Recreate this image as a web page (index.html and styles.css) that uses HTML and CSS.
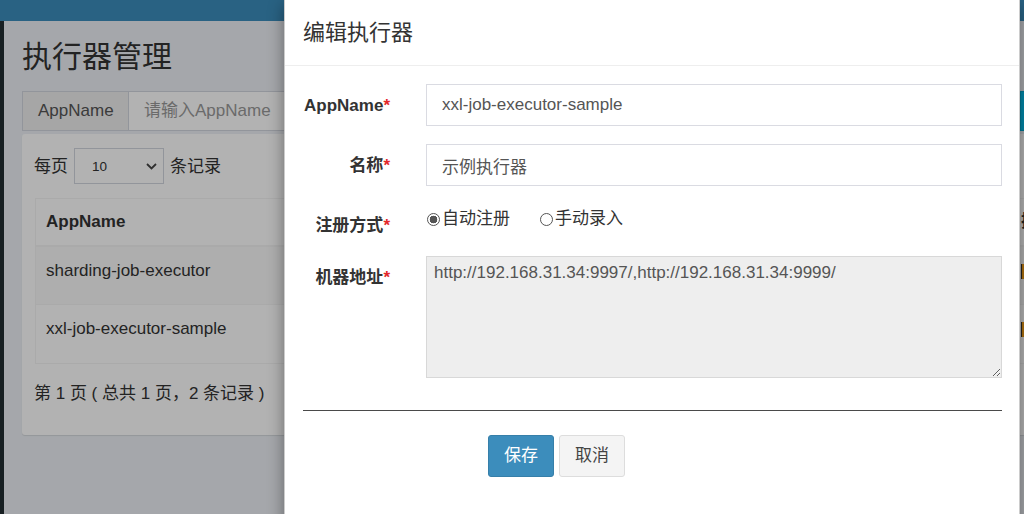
FILE: index.html
```html
<!DOCTYPE html>
<html lang="zh-CN">
<head>
<meta charset="utf-8">
<title>执行器管理</title>
<link rel="stylesheet" href="styles.css">
</head>
<body>
<div class="page">
  <header class="topbar"></header>
  <div class="layout">
    <aside class="sidebar"></aside>
    <main class="content">
      <h1 class="page-title">执行器管理</h1>
      <div class="filter-row">
        <div class="input-group">
          <span class="addon">AppName</span>
          <input class="filter-input" type="text" placeholder="请输入AppName">
        </div>
        <button class="btn-search" type="button" aria-label="搜索"></button>
      </div>
      <section class="box">
        <div class="length-row">
          <span>每页</span>
          <span class="fake-select"><span>10</span>
            <svg class="chev" width="11" height="7" viewBox="0 0 11 7"><path d="M1 1 L5.5 5.5 L10 1" fill="none" stroke="#444" stroke-width="1.8"/></svg>
          </span>
          <span>条记录</span>
        </div>
        <table class="grid-table">
          <colgroup>
            <col class="c1"><col class="c2"><col class="c3"><col class="c4"><col>
          </colgroup>
          <thead>
            <tr><th>AppName</th><th>名称</th><th>注册方式</th><th>OnLine 机器地址</th><th class="ops">操作</th></tr>
          </thead>
          <tbody>
            <tr class="odd"><td>sharding-job-executor</td><td>分片执行器</td><td>自动注册</td><td>查看 ( 1 )</td><td class="ops"><span class="btn-op"></span></td></tr>
            <tr><td>xxl-job-executor-sample</td><td>示例执行器</td><td>自动注册</td><td>查看 ( 2 )</td><td class="ops"><span class="btn-op"></span></td></tr>
          </tbody>
        </table>
        <div class="info">第 1 页 ( 总共 1 页，2 条记录 )</div>
      </section>
    </main>
  </div>

  <div class="backdrop"></div>

  <div class="modal">
    <div class="modal-header">
      <h4 class="modal-title">编辑执行器</h4>
    </div>
    <div class="modal-body">
      <div class="form-row">
        <label class="form-label">AppName<span class="req">*</span></label>
        <input class="form-input" type="text" value="xxl-job-executor-sample">
      </div>
      <div class="form-row">
        <label class="form-label">名称<span class="req">*</span></label>
        <input class="form-input" type="text" value="示例执行器">
      </div>
      <div class="form-row radio-row">
        <label class="form-label">注册方式<span class="req">*</span></label>
        <div class="radios">
          <label class="radio"><input type="radio" name="addressType" checked><span>自动注册</span></label>
          <label class="radio"><input type="radio" name="addressType"><span>手动录入</span></label>
        </div>
      </div>
      <div class="form-row">
        <label class="form-label">机器地址<span class="req">*</span></label>
        <textarea class="form-textarea" readonly>http://192.168.31.34:9997/,http://192.168.31.34:9999/</textarea>
      </div>
      <hr class="divider">
      <div class="actions">
        <button class="btn btn-primary" type="button">保存</button>
        <button class="btn btn-default" type="button">取消</button>
      </div>
    </div>
  </div>
</div>
</body>
</html>
```

FILE: styles.css
```css
html, body {
  margin: 0;
  height: 100%;
  overflow: hidden;
}

body {
  font-family: "Liberation Sans", "Noto Sans CJK SC", sans-serif;
  font-size: 17px;
  line-height: 25px;
  color: #333;
  background: #ecf0f5;
}

.page {
  position: relative;
  width: 1120px;
  height: 514px;
}

.topbar {
  height: 21px;
  background: #3c8dbc;
}

.layout {
  display: flex;
  height: 493px;
}

.sidebar {
  flex: none;
  width: 4px;
  background: #222d32;
}

.content {
  flex: 1;
  min-width: 0;
  background: #ecf0f5;
  padding: 16px 18px 0 18px;
}

.page-title {
  margin: 0;
  font-size: 30px;
  font-weight: 400;
  line-height: 40px;
  color: #333;
}

.filter-row {
  display: flex;
  margin-top: 14px;
  height: 40px;
}

.input-group {
  display: flex;
}

.addon {
  box-sizing: border-box;
  width: 107px;
  height: 40px;
  border: 1px solid #d2d6de;
  background: #eee;
  color: #555;
  padding: 0 15px;
  line-height: 38px;
}

.filter-input {
  box-sizing: border-box;
  width: 260px;
  height: 40px;
  border: 1px solid #d2d6de;
  border-left: 0;
  padding: 0 15px;
  font: inherit;
  color: #555;
  outline: none;
}

.filter-input::placeholder {
  color: #999;
}

.btn-search {
  margin-left: auto;
  width: 82px;
  height: 40px;
  border: 1px solid #00acd6;
  background: #00c0ef;
  color: #fff;
  font: inherit;
}

.box {
  box-sizing: border-box;
  height: 301px;
  margin-top: 3px;
  padding: 14px 12px 0 13px;
  background: #fff;
  border-radius: 3px;
  box-shadow: 0 1px 1px rgba(0, 0, 0, 0.1);
}

.length-row {
  display: flex;
  align-items: center;
  gap: 6px;
  height: 36px;
  margin-left: -1px;
}

.fake-select {
  box-sizing: border-box;
  display: flex;
  align-items: center;
  justify-content: space-between;
  width: 90px;
  height: 36px;
  padding: 0 6px 0 17px;
  border: 1px solid #d2d6de;
  font-size: 13.5px;
  color: #333;
}

.grid-table {
  width: 100%;
  margin-top: 14px;
  border-collapse: collapse;
  table-layout: fixed;
  border: 1px solid #f4f4f4;
}

.grid-table .c1 { width: 250px; }
.grid-table .c2 { width: 230px; }
.grid-table .c3 { width: 230px; }
.grid-table .c4 { width: 265px; }

.grid-table thead tr {
  height: 47px;
}

.grid-table th {
  text-align: left;
  font-weight: bold;
  padding: 0 10px;
  border: 1px solid #f4f4f4;
  border-bottom-width: 2px;
  white-space: nowrap;
}

.grid-table tbody tr {
  height: 59px;
}

.grid-table td {
  vertical-align: top;
  padding: 11px 10px;
  border: 1px solid #f4f4f4;
  white-space: nowrap;
}

.grid-table tr.odd td {
  background: #f9f9f9;
}

.btn-op {
  display: inline-block;
  width: 40px;
  height: 15px;
  margin-top: 6px;
  background: #f39c12;
  border-left: 1px solid #333;
}

.info {
  margin-top: 17px;
  margin-left: -1px;
}

.backdrop {
  position: absolute;
  inset: 0;
  background: rgba(0, 0, 0, 0.3);
}

.modal {
  position: absolute;
  left: 284px;
  top: 0;
  box-sizing: border-box;
  width: 736px;
  height: 540px;
  background: #fff;
  border: 1px solid rgba(0, 0, 0, 0.2);
  border-top: 0;
  box-shadow: 0 5px 15px rgba(0, 0, 0, 0.4);
}

.modal-header {
  box-sizing: border-box;
  height: 66px;
  padding: 18px 18px 0;
  border-bottom: 1px solid #eeeeee;
}

.modal-title {
  margin: 0;
  font-size: 22px;
  font-weight: 400;
  line-height: 30px;
  color: #333;
}

.modal-body {
  padding: 18px 17px 0 18px;
}

.form-row {
  display: grid;
  grid-template-columns: 87px 1fr;
  column-gap: 36px;
  margin-bottom: 18px;
}

.form-label {
  text-align: right;
  font-weight: bold;
  padding-top: 10px;
  line-height: 24px;
  white-space: nowrap;
  color: #333;
}

.req {
  color: #e3282a;
}

.form-input {
  box-sizing: border-box;
  width: 100%;
  height: 42px;
  padding: 0 15px;
  border: 1px solid #dadbe2;
  font: inherit;
  color: #555;
  outline: none;
}

.radio-row {
  height: 34px;
}

.radios {
  display: flex;
  align-items: flex-start;
  gap: 30px;
  padding-top: 2px;
  padding-left: 1px;
  line-height: 26px;
  color: #333;
}

.radio {
  display: flex;
  align-items: center;
  gap: 2px;
}

.radio input {
  appearance: none;
  -webkit-appearance: none;
  box-sizing: border-box;
  width: 13px;
  height: 13px;
  margin: 0;
  border: 1px solid #555;
  border-radius: 50%;
  background: #fff;
}

.radio input:checked {
  background: radial-gradient(circle, #555 0 3.6px, #fff 4.1px);
}

.form-textarea {
  box-sizing: border-box;
  display: block;
  width: 100%;
  height: 122px;
  padding: 3px 7px;
  border: 1px solid #d8d8d8;
  background: #eee;
  font: inherit;
  line-height: 25px;
  color: #555;
  resize: vertical;
  outline: none;
}

.divider {
  margin: 32px 0 0;
  border: 0;
  border-top: 1px solid #4a4a4a;
  height: 0;
}

.actions {
  display: flex;
  gap: 5px;
  margin-top: 24px;
  padding-left: 185px;
}

.btn {
  box-sizing: border-box;
  height: 42px;
  padding: 0 15px;
  border-radius: 3px;
  font: inherit;
  line-height: 40px;
}

.btn-primary {
  background: #3c8dbc;
  border: 1px solid #367fa9;
  color: #fff;
}

.btn-default {
  background: #f4f4f4;
  border: 1px solid #ddd;
  color: #444;
}
```
